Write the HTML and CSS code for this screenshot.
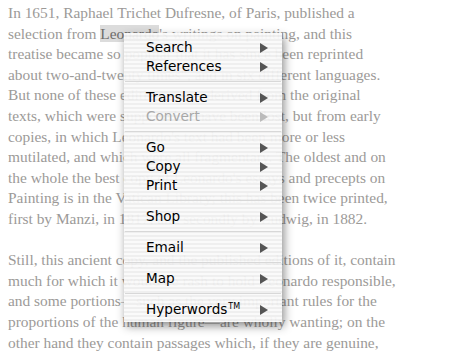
FILE: index.html
```html
<!DOCTYPE html>
<html lang="en">
  <head>
    <meta charset="UTF-8" />
    <meta name="viewport" content="width=device-width, initial-scale=1.0" />
    <title>Leonardo - Context Menu</title>
    <link rel="stylesheet" href="styles.css">
  </head>
  <body>
    <article class="page">
      <p>
        In 1651, Raphael Trichet Dufresne, of Paris, published a<br />
        selection from <span class="selected">Leonardo</span>'s writings on painting, and this<br />
        treatise became so popular that it has since been reprinted<br />
        about two-and-twenty times", and in six different languages.<br />
        But none of these editions were derived from the original<br />
        texts, which were supposed to have been lost, but from early<br />
        copies, in which Leonardo's text had been more or less<br />
        mutilated, and which were all fragmentary. The oldest and on<br />
        the whole the best copy of Leonardo's essays and precepts on<br />
        Painting is in the Vatican Library; this has been twice printed,<br />
        first by Manzi, in 1817, and secondly by Ludwig, in 1882.
      </p>
      <p>
        Still, this ancient copy, and the published editions of it, contain<br />
        much for which it would be rash to hold Leonardo responsible,<br />
        and some portions&mdash;such as the very important rules for the<br />
        proportions of the human figure&mdash;are wholly wanting; on the<br />
        other hand they contain passages which, if they are genuine,
      </p>
    </article>

    <ul class="menu">
      <li class="item">Search</li>
      <li class="item">References</li>
      <li class="sep"></li>
      <li class="item">Translate</li>
      <li class="item disabled">Convert</li>
      <li class="sep"></li>
      <li class="item">Go</li>
      <li class="item">Copy</li>
      <li class="item">Print</li>
      <li class="sep"></li>
      <li class="item">Shop</li>
      <li class="sep"></li>
      <li class="item">Email</li>
      <li class="sep"></li>
      <li class="item">Map</li>
      <li class="sep"></li>
      <li class="item">Hyperwords<sup>TM</sup></li>
    </ul>
  </body>
</html>
```

FILE: styles.css
```css
body {
  margin: 0;
  background-color: #fff;
  overflow: hidden;
  font-family: "Liberation Serif", "Times New Roman", serif;
}
.page {
  padding: 3px 8px;
  white-space: nowrap;
  font-size: 15.4px;
  line-height: 20.6px;
  color: #9c9a98;
}
.page p {
  margin: 0 0 20.6px;
}
.selected {
  background-color: #dcdcdc;
  color: #6e6c6a;
}
.menu {
  position: absolute;
  left: 124px;
  top: 33px;
  width: 158px;
  margin: 0;
  padding: 5px 0 3px;
  list-style: none;
  font-family: "DejaVu Sans", Verdana, sans-serif;
  font-size: 13.6px;
  color: #000;
  background-color: rgba(244, 244, 244, 0.9);
  background-image: repeating-linear-gradient(
    to bottom,
    rgba(255, 255, 255, 0.5) 0,
    rgba(255, 255, 255, 0.5) 2px,
    rgba(230, 230, 230, 0.4) 2px,
    rgba(230, 230, 230, 0.4) 4px
  );
  box-shadow: 2px 4px 9px rgba(0, 0, 0, 0.45);
}
.item {
  position: relative;
  height: 19px;
  line-height: 19px;
  padding-left: 22px;
}
.item::after {
  content: "";
  position: absolute;
  right: 14px;
  top: 5px;
  border-top: 5px solid transparent;
  border-bottom: 5px solid transparent;
  border-left: 8px solid #555;
}
.item.disabled {
  color: #a8a8a8;
}
.item.disabled::after {
  border-left-color: #bbb;
}
.item sup {
  font-size: 8px;
  vertical-align: 5px;
  line-height: 0;
  margin-left: 1px;
}
.sep {
  height: 12px;
  position: relative;
}
.sep::before {
  content: "";
  position: absolute;
  left: 1px;
  right: 1px;
  top: 5px;
  border-top: 1px solid #d8d8d8;
}
```
